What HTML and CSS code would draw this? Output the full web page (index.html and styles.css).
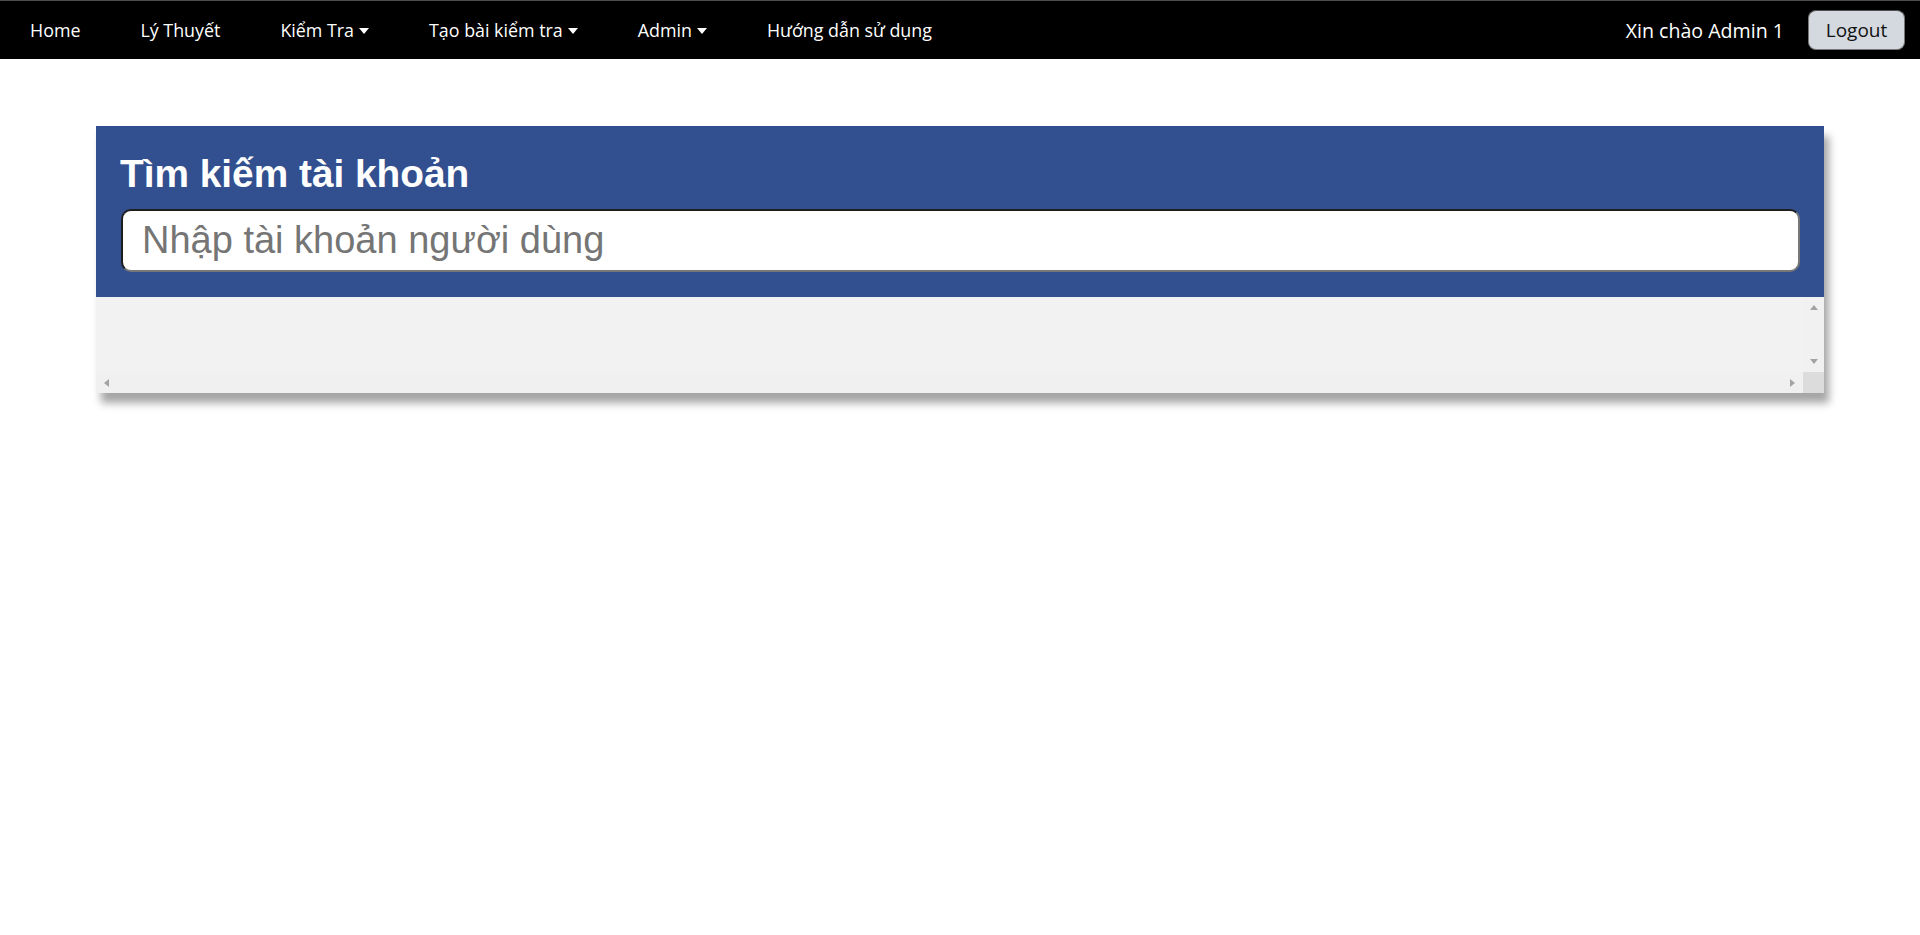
FILE: index.html
```html
<!DOCTYPE html>
<html lang="vi">
<head>
<meta charset="utf-8">
<title>Tìm kiếm tài khoản</title>
<link rel="stylesheet" href="styles.css">
</head>
<body>
<nav class="topbar">
  <ul class="nav-left">
    <li class="nav-item"><a href="#">Home</a></li>
    <li class="nav-item"><a href="#">Lý Thuyết</a></li>
    <li class="nav-item"><a href="#">Kiểm Tra<span class="caret"></span></a></li>
    <li class="nav-item"><a href="#">Tạo bài kiểm tra<span class="caret"></span></a></li>
    <li class="nav-item"><a href="#">Admin<span class="caret"></span></a></li>
    <li class="nav-item"><a href="#">Hướng dẫn sử dụng</a></li>
  </ul>
  <div class="nav-right">
    <span class="greet">Xin chào Admin 1</span>
    <button class="logout" type="button">Logout</button>
  </div>
</nav>
<main class="page">
  <section class="card">
    <header class="card-head">
      <h2 class="card-title">Tìm kiếm tài khoản</h2>
      <input class="search" type="text" placeholder="Nhập tài khoản người dùng">
    </header>
    <div class="results">
      <div class="results-main">
        <div class="results-body"></div>
        <div class="vscroll">
          <span class="sb-btn"><span class="arrow arrow-up"></span></span>
          <span class="sb-btn"><span class="arrow arrow-down"></span></span>
        </div>
      </div>
      <div class="results-foot">
        <div class="hscroll">
          <span class="sb-btn"><span class="arrow arrow-left"></span></span>
          <span class="sb-btn"><span class="arrow arrow-right"></span></span>
        </div>
        <div class="corner"></div>
      </div>
    </div>
  </section>
</main>
</body>
</html>
```

FILE: styles.css
```css
* { box-sizing: border-box; }

html, body {
  margin: 0;
  padding: 0;
  background: #fff;
}

body {
  font-family: "Open Sans", "Noto Sans", sans-serif;
  min-height: 100vh;
}

.topbar {
  display: flex;
  align-items: center;
  justify-content: space-between;
  height: 59px;
  background: #000;
  border-top: 1px solid #4d4d4d;
}

.nav-left {
  display: flex;
  align-items: center;
  list-style: none;
  margin: 0;
  padding: 0;
  height: 100%;
}

.nav-item a {
  display: flex;
  align-items: center;
  padding: 0 30px;
  color: #fff;
  text-decoration: none;
  font-size: 17.85px;
  line-height: 58px;
}

.caret {
  display: inline-block;
  width: 0;
  height: 0;
  margin-left: 5px;
  margin-top: 2px;
  border-left: 5px solid transparent;
  border-right: 5px solid transparent;
  border-top: 6px solid #fff;
}

.nav-right {
  display: flex;
  align-items: center;
  gap: 24px;
  padding-right: 15px;
}

.greet {
  color: #fff;
  font-size: 19.6px;
}

.logout {
  width: 97px;
  height: 40px;
  background: #d3d9df;
  border: 1px solid #777;
  border-top-color: #4f4f4f;
  border-radius: 8px;
  color: #111;
  font-family: "Open Sans", "Noto Sans", sans-serif;
  font-size: 19px;
  padding: 0;
}

.page {
  padding: 67px 96px 40px;
  min-height: calc(100vh - 59px);
}

.card {
  background: #f2f2f2;
  box-shadow: 5px 10px 8px #a6a6a6;
}

.card-head {
  background: #32508f;
  padding: 26px 25px 25px 24px;
}

.card-title {
  margin: 0 0 13px;
  color: #fff;
  font-family: "Liberation Sans", Arial, sans-serif;
  font-weight: bold;
  font-size: 38.8px;
  line-height: 44px;
}

.search {
  display: block;
  width: 100%;
  height: 63px;
  margin-left: 1px;
  padding: 0 16px 0 19px;
  border: 2px solid #777;
  border-top-color: #1e1e1e;
  border-left-color: #1e1e1e;
  border-radius: 10px;
  background: #fff;
  font-family: "Liberation Sans", Arial, sans-serif;
  font-size: 38px;
  color: #222;
  outline: none;
}

.search::placeholder {
  color: #757575;
}

.results {
  display: flex;
  flex-direction: column;
  height: 96px;
}

.results-main {
  display: flex;
  flex: 1;
}

.results-body {
  flex: 1;
  background: #f2f2f2;
}

.vscroll {
  width: 21px;
  display: flex;
  flex-direction: column;
  justify-content: space-between;
  background: #f1f1f1;
}

.results-foot {
  display: flex;
  height: 21px;
}

.hscroll {
  flex: 1;
  display: flex;
  justify-content: space-between;
  background: #f0f0f0;
}

.corner {
  width: 21px;
  background: #dcdcdc;
}

.sb-btn {
  width: 21px;
  height: 21px;
  display: flex;
  align-items: center;
  justify-content: center;
}

.arrow {
  width: 0;
  height: 0;
}

.arrow-up {
  border-left: 4px solid transparent;
  border-right: 4px solid transparent;
  border-bottom: 5px solid #a3a3a3;
}

.arrow-down {
  border-left: 4px solid transparent;
  border-right: 4px solid transparent;
  border-top: 5px solid #a3a3a3;
}

.arrow-left {
  border-top: 4px solid transparent;
  border-bottom: 4px solid transparent;
  border-right: 5px solid #a3a3a3;
}

.arrow-right {
  border-top: 4px solid transparent;
  border-bottom: 4px solid transparent;
  border-left: 5px solid #a3a3a3;
}
```
